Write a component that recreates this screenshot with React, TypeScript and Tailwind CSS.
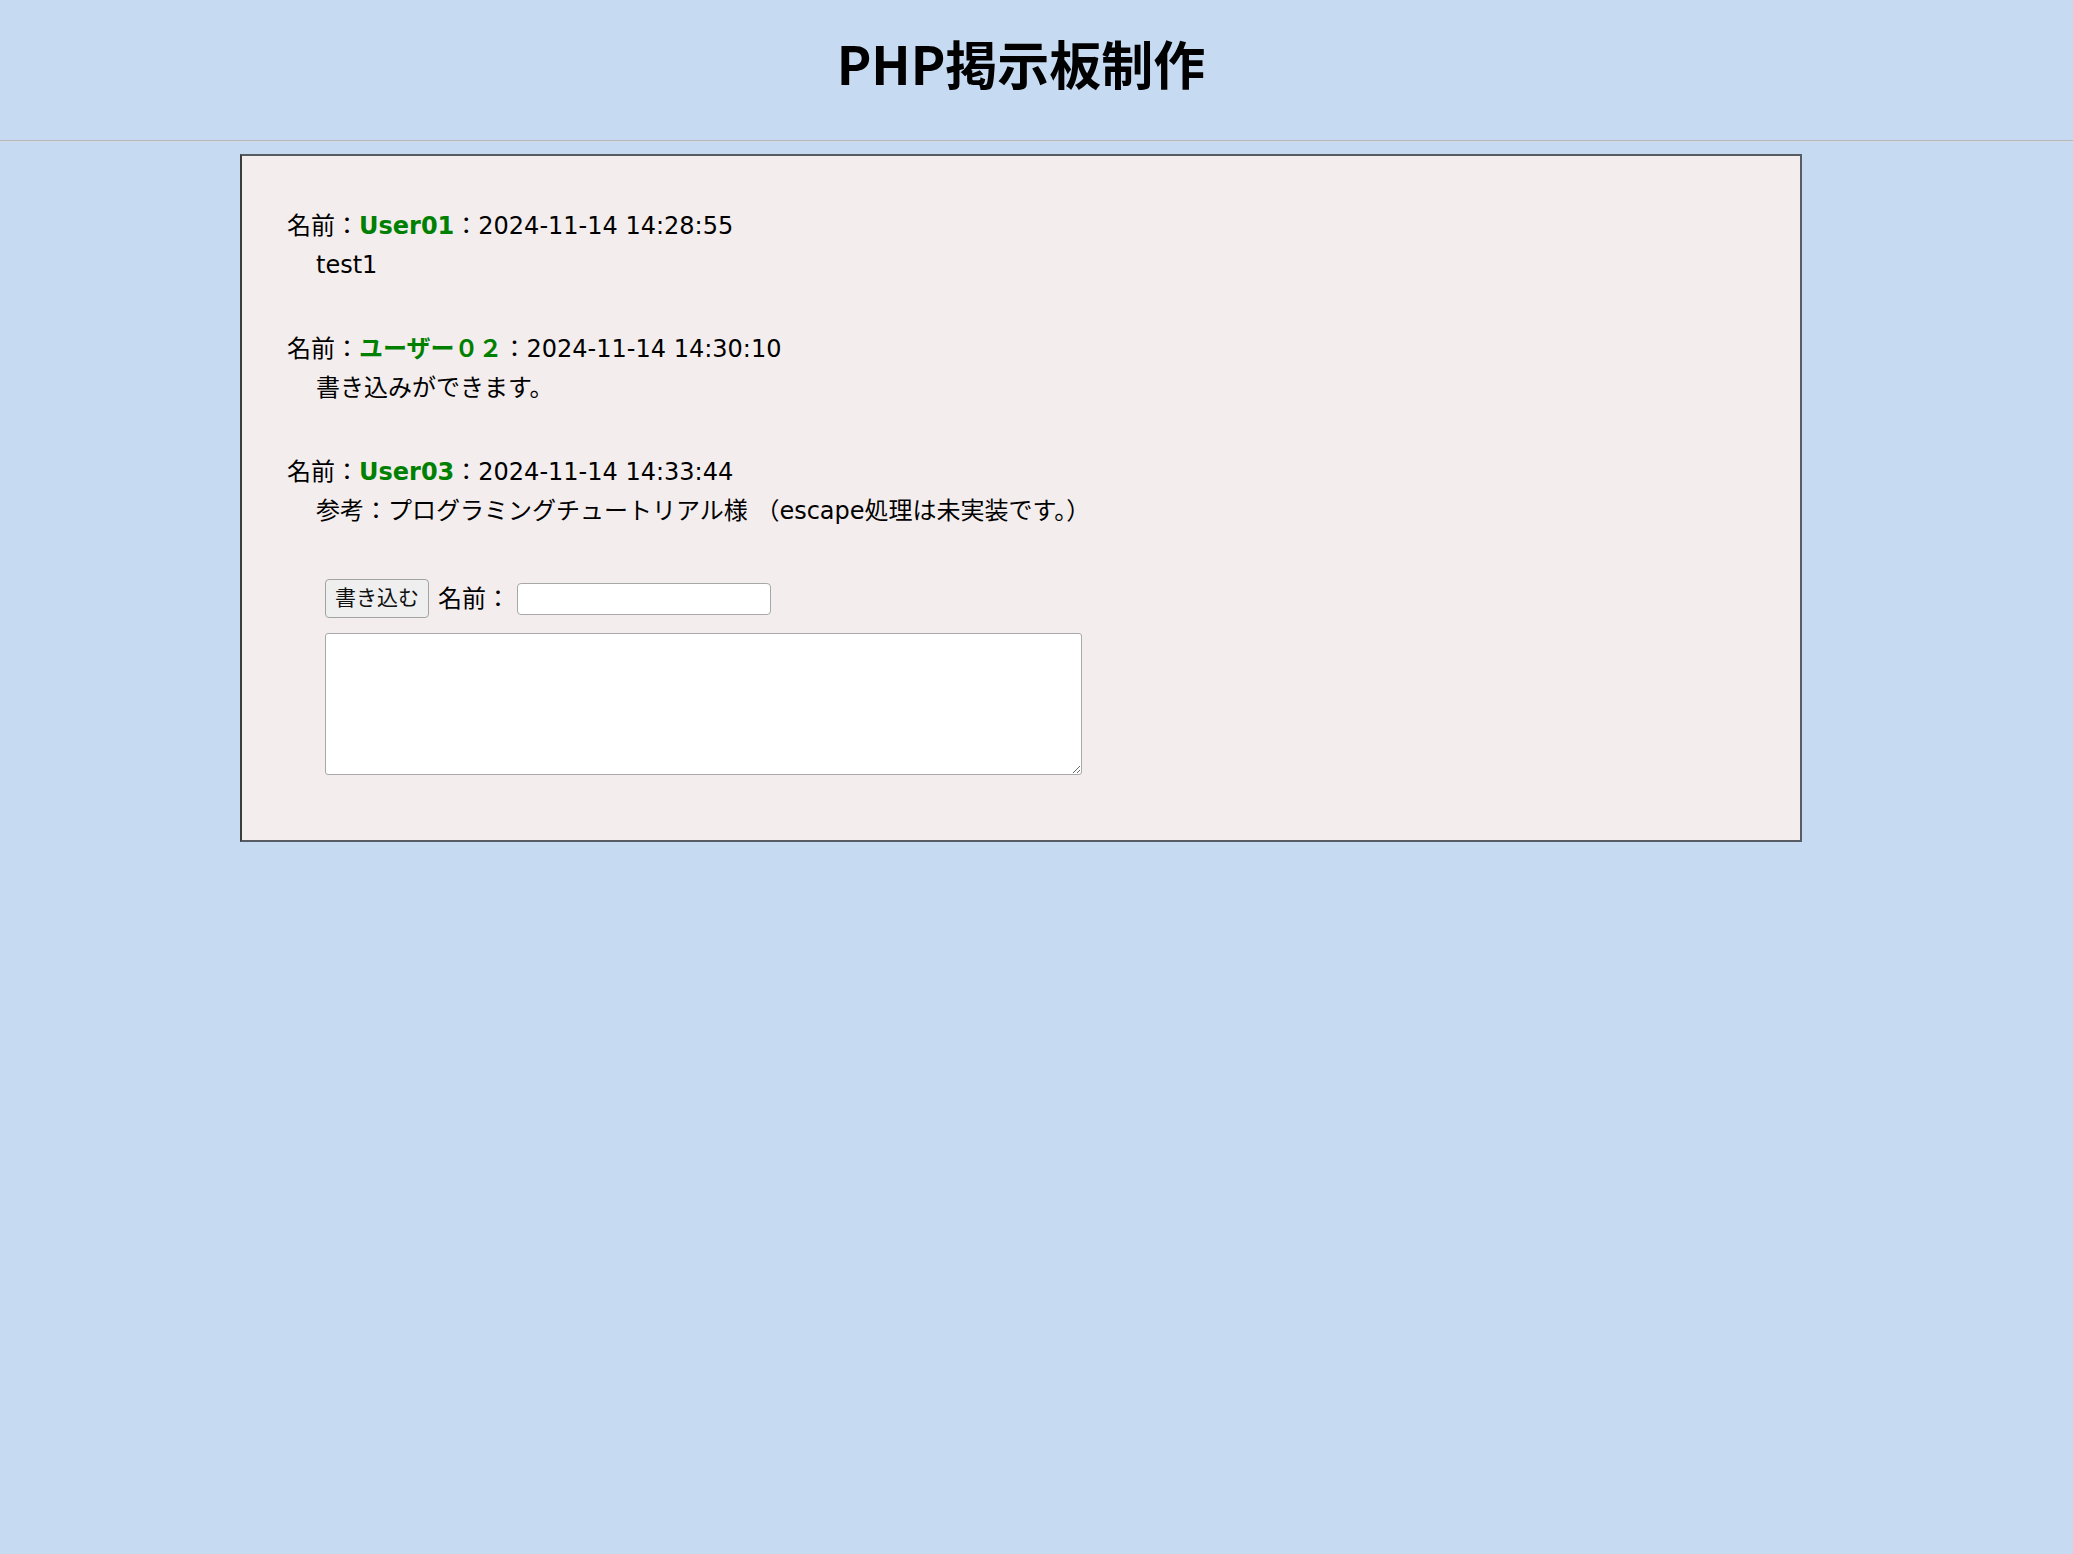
import React from "react";

const posts = [
  { name: "User01", time: "2024-11-14 14:28:55", body: "test1" },
  { name: "ユーザー０２", time: "2024-11-14 14:30:10", body: "書き込みができます。" },
  { name: "User03", time: "2024-11-14 14:33:44", body: "参考：プログラミングチュートリアル様 （escape処理は未実装です。）" },
];

export default function App() {
  return (
    <div
      className="min-h-screen bg-[#c6daf1] text-black"
      style={{ fontFamily: '"DejaVu Sans", "Noto Sans CJK JP", sans-serif' }}
    >
      <header className="w-full">
        <div className="w-[2042px] h-[140px] flex justify-center">
          <h1
            className="mt-[37px] text-[52px] leading-[52px] font-bold"
            style={{ fontFamily: '"Noto Sans CJK JP", sans-serif' }}
          >
            PHP掲示板制作
          </h1>
        </div>
        <div className="h-[1px] bg-[#b4b8be]" />
        <div className="h-[1px] bg-[#d6dbe1]" />
      </header>

      <div className="w-[2042px]">
        <main className="mx-auto mt-[12px] w-[1562px] border-2 border-[#575c64] border-l-[#3c3c3c] bg-[#f3eded] pl-[45px] pt-[51px] pb-[65px]">
          <div className="flex flex-col gap-[45px] text-[24px] leading-[39px]">
            {posts.map((p) => (
              <div key={p.time}>
                <div>
                  名前：<span className="font-bold text-[#008000]">{p.name}</span>：{p.time}
                </div>
                <div className="pl-[29px]">{p.body}</div>
              </div>
            ))}
          </div>

          <form className="ml-[38px] mt-[48px] flex flex-col gap-[15px]" onSubmit={(e) => e.preventDefault()}>
            <div className="flex items-center">
              <button
                type="submit"
                className="h-[39px] px-[9px] rounded-[4px] border-[1.5px] border-[#a3a3a3] bg-[#efefef] text-[21px] leading-none text-[#111]"
              >
                書き込む
              </button>
              <span className="ml-[9px] text-[24px] leading-none">名前：</span>
              <input
                type="text"
                className="ml-[7px] w-[254px] h-[32px] rounded-[4px] border-[1.5px] border-[#a8a8a8] bg-white px-1 text-[20px] outline-none"
              />
            </div>
            <textarea className="block w-[757px] h-[142px] rounded-[3px] border-[1.5px] border-[#a8a8a8] bg-white p-1 text-[20px] outline-none" />
          </form>
        </main>
      </div>
    </div>
  );
}
